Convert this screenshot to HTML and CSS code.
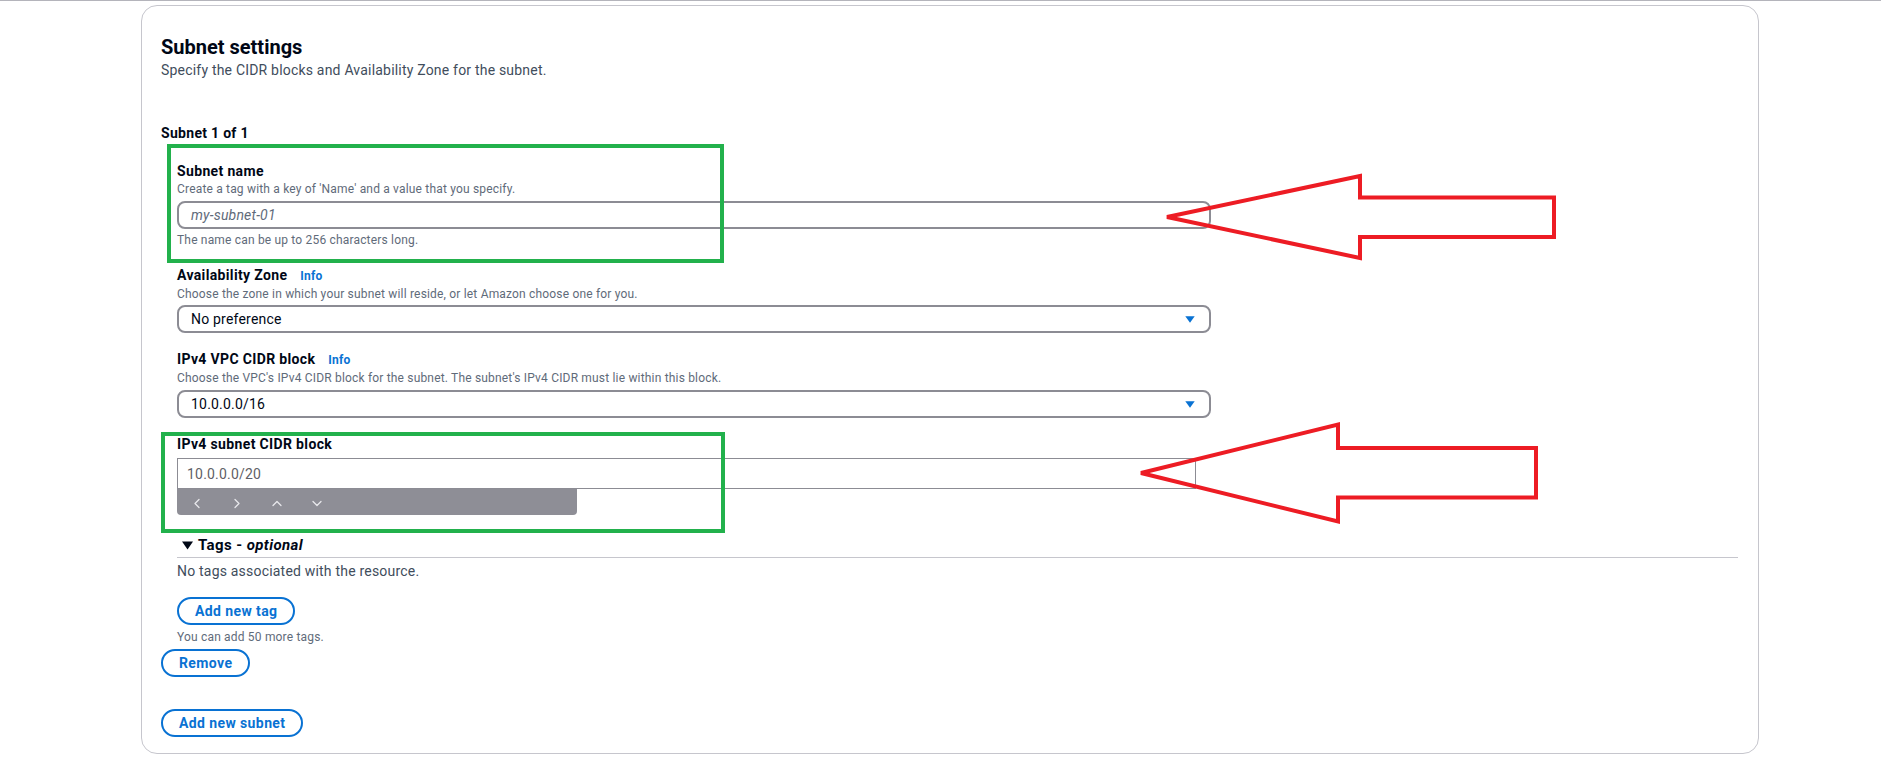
FILE: index.html
```html
<!DOCTYPE html>
<html lang="en">
<head>
<meta charset="utf-8">
<title>Subnet settings</title>
<link rel="stylesheet" href="styles.css">
</head>
<body>
<div class="topline"></div>
<div class="card">
  <h2 class="title">Subnet settings</h2>
  <p class="subtitle">Specify the CIDR blocks and Availability Zone for the subnet.</p>
  <div class="subnet-head">Subnet 1 of 1</div>
  <div class="subnet">
    <div class="field field-first">
      <div class="label">Subnet name</div>
      <div class="desc">Create a tag with a key of 'Name' and a value that you specify.</div>
      <div class="input"><span class="placeholder">my-subnet-01</span></div>
      <div class="hint">The name can be up to 256 characters long.</div>
    </div>
    <div class="field field-az">
      <div class="label"><span>Availability Zone</span><span class="info">Info</span></div>
      <div class="desc">Choose the zone in which your subnet will reside, or let Amazon choose one for you.</div>
      <div class="input select"><span>No preference</span><svg class="caret" width="10" height="7" viewBox="0 0 10 7"><polygon points="0.3,0.3 9.7,0.3 5,6.7" fill="#0972d3"/></svg></div>
    </div>
    <div class="field field-next">
      <div class="label"><span>IPv4 VPC CIDR block</span><span class="info">Info</span></div>
      <div class="desc">Choose the VPC's IPv4 CIDR block for the subnet. The subnet's IPv4 CIDR must lie within this block.</div>
      <div class="input select"><span>10.0.0.0/16</span><svg class="caret" width="10" height="7" viewBox="0 0 10 7"><polygon points="0.3,0.3 9.7,0.3 5,6.7" fill="#0972d3"/></svg></div>
    </div>
    <div class="field field-next">
      <div class="label">IPv4 subnet CIDR block</div>
      <div class="cidr-input">10.0.0.0/20</div>
      <div class="toolbar">
        <svg width="160" height="26" viewBox="0 0 160 26">
          <g fill="none" stroke="#e8e8ec" stroke-width="1.3" stroke-linecap="round" stroke-linejoin="round">
            <polyline points="22,10.5 18,14.5 22,18.5"/>
            <polyline points="58,10.5 62,14.5 58,18.5"/>
            <polyline points="96,16.5 100,12.5 104,16.5"/>
            <polyline points="136,12.5 140,16.5 144,12.5"/>
          </g>
        </svg>
      </div>
    </div>
    <div class="tags">
      <div class="tags-head">
        <svg class="tri" width="11" height="9" viewBox="0 0 11 9"><polygon points="0,0.5 11,0.5 5.5,8.5" fill="#000716"/></svg>
        <span>Tags - <em>optional</em></span>
      </div>
      <div class="no-tags">No tags associated with the resource.</div>
      <div class="btn-row btn-row-tag"><button class="btn">Add new tag</button></div>
      <div class="desc tag-note">You can add 50 more tags.</div>
    </div>
  </div>
  <div class="btn-row btn-row-remove"><button class="btn">Remove</button></div>
  <div class="btn-row btn-row-add"><button class="btn">Add new subnet</button></div>
</div>

<svg class="annotations" width="1881" height="766" viewBox="0 0 1881 766">
  <g fill="none" stroke="#22b14c" stroke-width="4">
    <rect x="169" y="146" width="553" height="115"/>
    <rect x="163" y="434" width="560" height="97"/>
  </g>
  <g fill="none" stroke="#ed1c24" stroke-width="4" stroke-linejoin="miter">
    <polygon points="1167,217 1360,176 1360,197.5 1554,197.5 1554,237 1360,237 1360,258"/>
    <polygon points="1141,473 1338,424.5 1338,448 1536,448 1536,497.5 1338,497.5 1338,521.5"/>
  </g>
</svg>
</body>
</html>
```

FILE: styles.css
```css
* {
  box-sizing: border-box;
}

html,
body {
  margin: 0;
  padding: 0;
  background: #ffffff;
}

body {
  position: relative;
  width: 1881px;
  height: 766px;
  overflow: hidden;
  font-family: Roboto, "Liberation Sans", Arial, sans-serif;
  color: #000716;
  letter-spacing: 0.2px;
}

.topline {
  height: 1px;
  background: #b4b4bb;
}

.card {
  margin: 4px 0 0 141px;
  width: 1618px;
  border: 1px solid #c6c6cd;
  border-radius: 16px;
  padding: 29px 20px 16px 19px;
}

.title {
  margin: 0;
  font-size: 20px;
  line-height: 24px;
  font-weight: 700;
  letter-spacing: 0;
}

.subtitle {
  margin: 1px 0 0;
  font-size: 14px;
  line-height: 20px;
  color: #414d5c;
}

.subnet-head {
  margin-top: 43px;
  font-size: 14px;
  line-height: 20px;
  font-weight: 700;
  letter-spacing: 0.3px;
}

.subnet {
  padding-left: 16px;
}

.field-first {
  margin-top: 19px;
}

.field-az {
  margin-top: 18px;
}

.field-next {
  margin-top: 17px;
}

.label {
  display: flex;
  align-items: baseline;
  gap: 13px;
  font-size: 14px;
  line-height: 19px;
  font-weight: 700;
  letter-spacing: 0.35px;
}

.info {
  font-size: 12px;
  font-weight: 700;
  color: #0972d3;
  letter-spacing: 0.2px;
}

.desc {
  font-size: 12px;
  line-height: 16px;
  color: #5f6b7a;
  letter-spacing: 0.18px;
}

.input {
  margin-top: 4px;
  width: 1034px;
  height: 28px;
  border: 2px solid #8c8c94;
  border-radius: 8px;
  display: flex;
  align-items: center;
  padding: 0 12px;
  font-size: 14px;
}

.field-az .input {
  margin-top: 3px;
}

.placeholder {
  font-style: italic;
  color: #5f6b7a;
}

.select {
  justify-content: space-between;
  padding-right: 14px;
}

.caret {
  display: block;
}

.hint {
  margin-top: 3px;
  font-size: 12px;
  line-height: 16px;
  color: #5f6b7a;
  letter-spacing: 0.18px;
}

.cidr-input {
  margin-top: 4px;
  width: 1019px;
  height: 31px;
  border: 1px solid #8c8c94;
  display: flex;
  align-items: center;
  padding-left: 9px;
  font-size: 14px;
  color: #5f5f66;
}

.toolbar {
  width: 400px;
  height: 26px;
  background: #8e8e96;
  border-radius: 0 0 4px 4px;
}

.toolbar svg {
  display: block;
}

.tags {
  margin-top: 20px;
}

.tags-head {
  display: flex;
  align-items: center;
  gap: 5px;
  padding: 0 0 2px 5px;
  border-bottom: 1px solid #c6c6cd;
  font-size: 15px;
  line-height: 20px;
  font-weight: 700;
  letter-spacing: 0.4px;
}

.tri {
  display: block;
}

.tags-head em {
  font-style: italic;
}

.no-tags {
  margin-top: 3px;
  font-size: 14px;
  line-height: 20px;
  color: #414d5c;
}

.btn-row-tag {
  margin-top: 16px;
}

.tag-note {
  margin-top: 4px;
}

.btn-row-remove {
  margin-top: 4px;
}

.btn-row-add {
  margin-top: 32px;
}

.btn {
  display: block;
  height: 28px;
  margin: 0;
  padding: 0 16px;
  border: 2px solid #0972d3;
  border-radius: 20px;
  background: #ffffff;
  color: #0972d3;
  font-family: Roboto, "Liberation Sans", Arial, sans-serif;
  font-size: 14px;
  line-height: 24px;
  font-weight: 700;
  letter-spacing: 0.4px;
}

.annotations {
  position: absolute;
  top: 0;
  left: 0;
  pointer-events: none;
}
```
